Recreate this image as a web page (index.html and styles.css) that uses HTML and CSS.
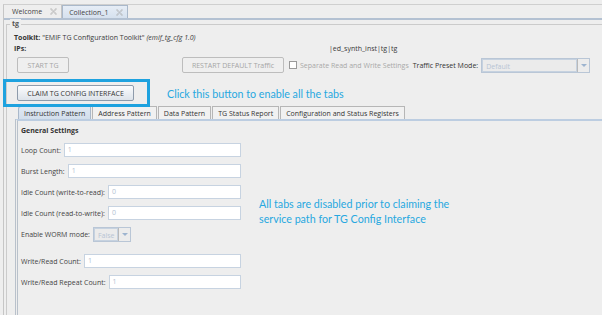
FILE: index.html
```html
<!DOCTYPE html>
<html lang="en">
<head>
<meta charset="UTF-8">
<meta name="viewport" content="width=device-width, initial-scale=1.0">
<title>TG Configuration Toolkit</title>
<link rel="stylesheet" href="styles.css">
</head>
<body>
<div class="editor">
<div class="editor-tabs">
<div class="etab">Welcome
<svg class="close" width="7" height="7" viewBox="0 0 8 8"><path d="M1 0.5 L4 3.2 L7 0.5 L7.5 1 L4.8 4 L7.5 7 L7 7.5 L4 4.8 L1 7.5 L0.5 7 L3.2 4 L0.5 1 Z" fill="none" stroke="#a8a8a8" stroke-width="0.7"/></svg>
</div>
<div class="etab active">Collection_1
<svg class="close" width="7" height="7" viewBox="0 0 8 8"><path d="M1 0.5 L4 3.2 L7 0.5 L7.5 1 L4.8 4 L7.5 7 L7 7.5 L4 4.8 L1 7.5 L0.5 7 L3.2 4 L0.5 1 Z" fill="none" stroke="#a8a8a8" stroke-width="0.7"/></svg>
</div>
</div>

<div class="group">
<span class="group-title">tg</span>
<div class="info-row"><b>Toolkit:</b>&nbsp;"EMIF TG Configuration Toolkit" <i>&nbsp;(emif_tg_cfg 1.0)</i></div>
<div class="info-row"><b class="ips-label">IPs:</b><span>|ed_synth_inst|tg|tg</span></div>

<div class="control-row">
<button class="btn btn-start" disabled>START TG</button>
<button class="btn btn-restart" disabled>RESTART DEFAULT Traffic</button>
<span class="check"></span>
<span class="check-label">Separate Read and Write Settings</span>
<span class="preset-label">Traffic Preset Mode:</span>
<div class="combo combo-preset"><span class="combo-text">Default</span><span class="combo-arrow"></span></div>
</div>

<div class="claim-row">
<div class="highlight"></div>
<button class="btn btn-claim">CLAIM TG CONFIG INTERFACE</button>
<span class="note">Click this button to enable all the tabs</span>
</div>

<div class="ptabs">
<div class="ptab active">Instruction Pattern</div>
<div class="ptab">Address Pattern</div>
<div class="ptab">Data Pattern</div>
<div class="ptab">TG Status Report</div>
<div class="ptab">Configuration and Status Registers</div>
</div>

<div class="panel">
<div class="fields">
<div class="section-title">General Settings</div>
<div class="field"><label>Loop Count:</label><span class="input">1</span></div>
<div class="field"><label>Burst Length:</label><span class="input">1</span></div>
<div class="field"><label>Idle Count (write-to-read):</label><span class="input">0</span></div>
<div class="field"><label>Idle Count (read-to-write):</label><span class="input">0</span></div>
<div class="field"><label>Enable WORM mode:</label><div class="combo combo-worm"><span class="combo-text">False</span><span class="combo-arrow"></span></div></div>
<div class="field field-gap"><label>Write/Read Count:</label><span class="input">1</span></div>
<div class="field"><label>Write/Read Repeat Count:</label><span class="input">1</span></div>
</div>
<p class="note note-side">All tabs are disabled prior to claiming the<br>service path for TG Config Interface</p>
</div>
</div>
</div>
</body>
</html>
```

FILE: styles.css
```css
body {
    margin: 0;
    width: 602px;
    height: 315px;
    overflow: hidden;
    background: #eeeeee;
    font-family: "Open Sans", "Noto Sans", sans-serif;
    font-size: 7px;
    color: #3a3a3a;
}

.editor {
    margin: 4px 0 0 3px;
    border-left: 1px solid #c6c6c6;
    border-top: 1px solid #cfcfcf;
    height: 320px;
}

/* editor tabs */
.editor-tabs {
    display: flex;
    height: 13px;
    padding-left: 4px;
    border-bottom: 2px solid #b3c1d2;
}

.etab {
    display: flex;
    align-items: center;
    gap: 8px;
    padding: 0 4px;
    border-right: 1px solid #c4c4c4;
    color: #444;
}

.etab.active {
    background: linear-gradient(#e6edf6, #d6e1ee);
    border: 1px solid #a9b8ca;
    border-bottom: none;
    padding: 0 4px 0 6px;
}

.close {
    display: block;
}

/* tg group */
.group {
    position: relative;
    margin: 4px 0 0 2px;
    border-top: 1px solid #cbcbcb;
    border-left: 1px solid #cbcbcb;
    height: 300px;
}

.group-title {
    position: absolute;
    top: -6px;
    left: 3px;
    padding: 0 2px;
    background: #eeeeee;
    font-weight: bold;
    color: #555;
}

.info-row {
    display: flex;
    align-items: center;
    height: 10px;
    padding-left: 7px;
    margin-top: 1px;
}

.info-row:first-of-type {
    margin-top: 7px;
}

.info-row b {
    font-weight: bold;
    color: #333;
}

.ips-label {
    width: 315px;
}

.control-row {
    display: flex;
    align-items: center;
    height: 16px;
    margin-top: 4px;
}

.btn {
    font-family: inherit;
    font-size: 7px;
    height: 16px;
    padding: 0;
    border-radius: 2px;
    border: 1px solid #bdbdbd;
    background: #efefef;
    color: #a5a5a5;
}

.btn-start {
    width: 52px;
    margin-left: 10px;
}

.btn-restart {
    width: 102px;
    margin-left: 113px;
}

.check {
    width: 6px;
    height: 6px;
    margin-left: 5px;
    border: 1px solid #9a9a9a;
    background: #fff;
}

.check-label {
    margin-left: 3px;
    color: #a8a8a8;
}

.preset-label {
    margin-left: 4px;
    color: #333;
}

.combo {
    display: flex;
    height: 15px;
    border: 1px solid #b9c6d6;
    background: #ebebeb;
    box-sizing: border-box;
}

.combo-text {
    flex: 1;
    padding-left: 3px;
    line-height: 13px;
    color: #b7c4d4;
    border: 1px solid #c6d2e0;
}

.combo-arrow {
    position: relative;
    width: 11px;
    border-left: 1px solid #b9b9b9;
    background: #ececec;
}

.combo-arrow::after {
    content: "";
    position: absolute;
    left: 3px;
    top: 5px;
    border-left: 3px solid transparent;
    border-right: 3px solid transparent;
    border-top: 3px solid #9db4cf;
}

.combo-preset {
    width: 109px;
    margin-left: 3px;
}

/* claim */
.claim-row {
    position: relative;
    display: flex;
    align-items: center;
    height: 16px;
    margin-top: 12px;
}

.highlight {
    position: absolute;
    left: -4px;
    top: -6px;
    width: 141px;
    height: 22px;
    border: 3px solid #1ea2df;
}

.btn-claim {
    width: 117px;
    margin-left: 10px;
    color: #333;
    border-color: #8e9bab;
    background: linear-gradient(#fbfcfd, #dde3ea);
}

.note {
    font-family: "Lato", "Open Sans", sans-serif;
    font-size: 10.7px;
    color: #27a8e0;
}

.claim-row .note {
    margin-left: 33px;
}

/* panel tabs */
.ptabs {
    display: flex;
    height: 13px;
    margin: 5px 0 0 11px;
}

.ptab {
    display: flex;
    align-items: center;
    padding: 0 5px;
    border: 1px solid #b6b6b6;
    border-bottom: none;
    margin-right: 1px;
    background: #f1f1f1;
    color: #333;
}

.ptab.active {
    background: linear-gradient(#dfe8f3, #d2deec);
    border-color: #a9b8ca;
    border-radius: 3px 0 0 0;
}

.panel {
    display: flex;
    align-items: flex-start;
    margin-left: 8px;
    border-top: 2px solid #bccde1;
    border-left: 3px double #b9c1cb;
    padding: 5px 0 0 3px;
    height: 200px;
}

.fields {
    width: 220px;
}

.section-title {
    height: 10px;
    line-height: 10px;
    font-weight: bold;
    color: #333;
}

.field {
    display: flex;
    align-items: center;
    height: 14px;
    margin-top: 7px;
}

.field:first-of-type {
    margin-top: 11px;
}

.field-gap {
    margin-top: 13px;
}

.field label {
    margin-right: 3px;
    color: #444;
}

.input {
    flex: 1;
    height: 14px;
    box-sizing: border-box;
    border: 1px solid #c7d3e1;
    background: #fff;
    padding-left: 3px;
    line-height: 12px;
    color: #b3c1d2;
}

.combo-worm {
    width: 38px;
}

.note-side {
    margin: 71px 0 0 18px;
    line-height: 14.5px;
}
```
